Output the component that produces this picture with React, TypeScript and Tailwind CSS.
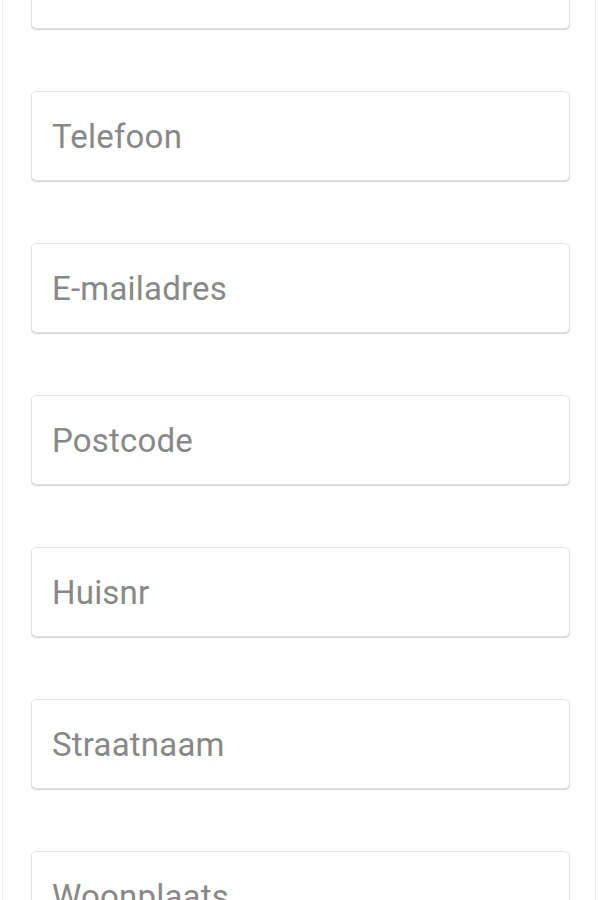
const fields = ['', 'Telefoon', 'E-mailadres', 'Postcode', 'Huisnr', 'Straatnaam', 'Woonplaats']

export default function App() {
  return (
    <div className="h-[900px] overflow-hidden bg-white" style={{ fontFamily: 'Roboto, "Liberation Sans", sans-serif' }}>
      <div className="ml-[2px] mr-[3px] flex h-full flex-col border-x border-[#ececec] pl-[28px] pr-[25px]">
        <div className="-mt-[61px] flex flex-col gap-[62px]">
          {fields.map((f, i) => (
            <input
              key={i}
              type="text"
              placeholder={f}
              className="h-[90px] w-full shrink-0 rounded-[5px] border border-[#e2e2e2] bg-white px-5 pt-[1px] text-[33px] tracking-[0.2px] text-[#555] shadow-[0_1px_1px_rgba(0,0,0,0.18)] outline-none placeholder:text-[#888]"
            />
          ))}
        </div>
      </div>
    </div>
  )
}
